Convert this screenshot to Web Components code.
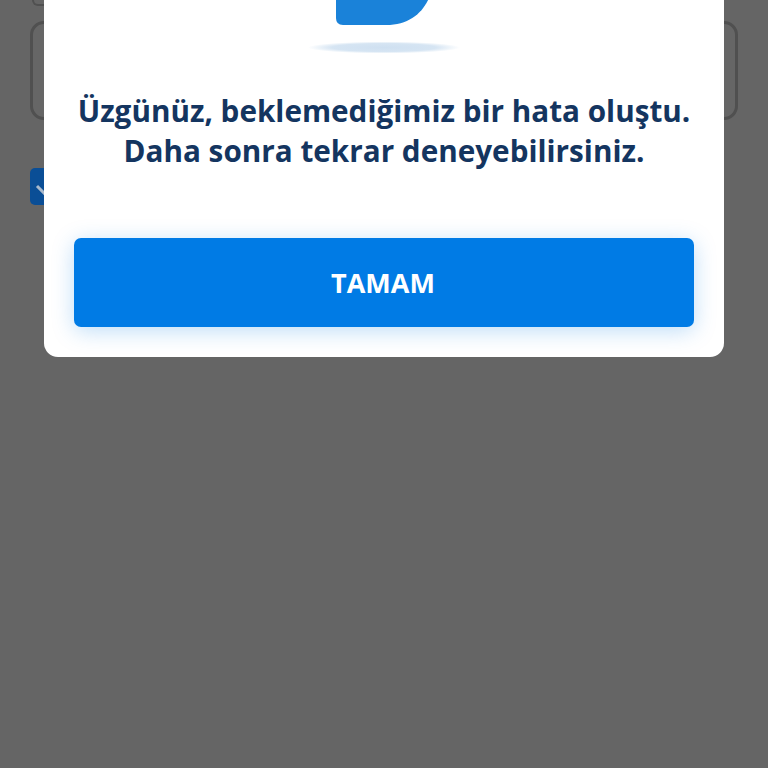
<!DOCTYPE html>
<html lang="tr">
<head>
<meta charset="utf-8">
<title>Hata</title>
<style>
  html, body { margin: 0; height: 100%; overflow: hidden; background: #656565; }
  body { font-family: "Open Sans", "Liberation Sans", sans-serif; }
</style>
</head>
<body>
<form-behind></form-behind>
<error-dialog>
  <span slot="message">Üzgünüz, beklemediğimiz bir hata oluştu.<br>Daha sonra tekrar deneyebilirsiniz.</span>
  <span slot="action">TAMAM</span>
</error-dialog>
<script>
class FormBehind extends HTMLElement {
  constructor() {
    super();
    this.attachShadow({ mode: 'open' });
    this.shadowRoot.innerHTML = `
      <style>
        :host { display: block; padding: 0 30px; box-sizing: border-box; height: 768px; background: #656565; }
        .label { width: 30px; height: 6px; margin: 0 0 15px 2px; box-sizing: border-box; border: 2px solid #505050; border-top: 0; border-radius: 0 0 6px 6px; }
        .field { height: 99px; box-sizing: border-box; border: 3px solid #505050; border-radius: 14px; background: #666; }
        .check { margin-top: 48px; width: 36px; height: 37px; border-radius: 5px; background: #0a4e96; display: flex; padding-left: 5px; box-sizing: border-box; align-items: center; }
        svg { width: 20px; height: 20px; }
      </style>
      <div class="label"></div>
      <div class="field"></div>
      <div class="check">
        <svg viewBox="0 0 20 20"><path d="M2 9l7 7 10-11" fill="none" stroke="#a9b9cc" stroke-width="3"/></svg>
      </div>`;
  }
}

class ErrorDialog extends HTMLElement {
  constructor() {
    super();
    this.attachShadow({ mode: 'open' });
    this.shadowRoot.innerHTML = `
      <style>
        :host { display: block; position: absolute; top: 0; left: 44px; width: 680px; height: 357px; box-sizing: border-box; background: #fff; border-radius: 0 0 14px 14px; color: #143560; text-align: center; padding: 0 30px; }
        .art { display: block; width: 156px; height: 54px; margin: 0 auto; }
        .msg { margin-top: 37px; font-size: 29.7px; line-height: 40px; font-weight: 700; white-space: nowrap; }
        button { display: block; width: 100%; height: 89px; margin-top: 67px; border: 0; border-radius: 7px; background: #007be5; color: #fff; font: 700 27px "Open Sans", "Liberation Sans", sans-serif; box-shadow: 0 4px 22px rgba(0, 123, 229, .26); padding: 0 2px 0 0; }
      </style>
      <svg class="art" viewBox="0 0 156 54">
        <defs>
          <radialGradient id="sh" cx="50%" cy="50%" r="50%">
            <stop offset="0" stop-color="#cfe0f1"/>
            <stop offset=".68" stop-color="#d6e5f3"/>
            <stop offset="1" stop-color="#fff"/>
          </radialGradient>
        </defs>
        <path d="M30 -10H126C120 10 106 25 80 25H37Q30 25 30 18Z" fill="#1a82d9"/>
        <ellipse cx="78" cy="47.5" rx="76" ry="6" fill="url(#sh)"/>
      </svg>
      <div class="msg"><slot name="message"></slot></div>
      <button type="button"><slot name="action"></slot></button>`;
  }
}

customElements.define('form-behind', FormBehind);
customElements.define('error-dialog', ErrorDialog);
</script>
</body>
</html>
